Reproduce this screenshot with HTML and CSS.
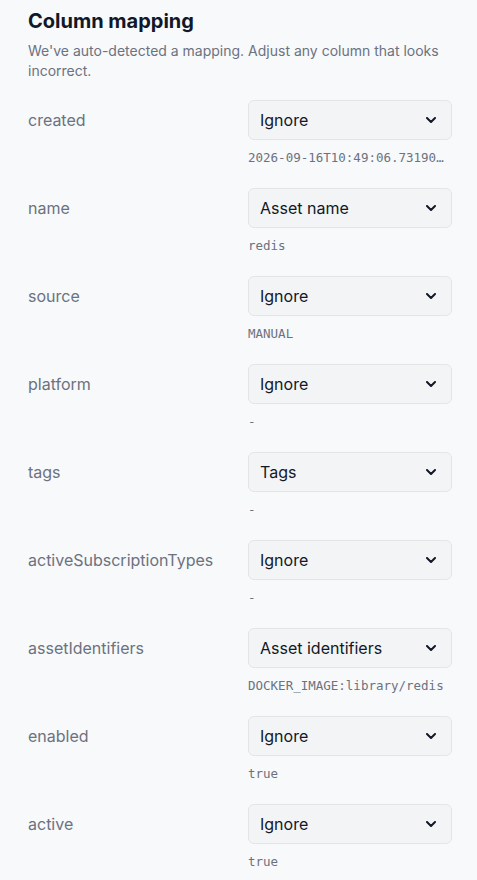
FILE: index.html
```html
<!doctype html>
<html lang="en">
<head>
    <meta charset="UTF-8">
    <meta name="viewport" content="width=device-width, initial-scale=1.0">
    <title>Column mapping</title>
    <link rel="stylesheet" href="styles.css">
</head>
<body>

<h1 class="title">Column mapping</h1>
<p class="lead">We've auto-detected a mapping. Adjust any column that looks incorrect.</p>

<!--one row per source column: name, target field, first sample value-->
<div class="mapping">
    <div class="row">
        <div class="col-name">created</div>
        <div class="col-target">
            <button class="picker"><span>Ignore</span><svg width="10" height="6" viewBox="0 0 10 6"><path d="M1 1l4 4 4-4"/></svg></button>
            <div class="sample" title="2026-09-16T10:49:06.731908+00:00">2026-09-16T10:49:06.731908+00:00</div>
        </div>
    </div>
    <div class="row">
        <div class="col-name">name</div>
        <div class="col-target">
            <button class="picker"><span>Asset name</span><svg width="10" height="6" viewBox="0 0 10 6"><path d="M1 1l4 4 4-4"/></svg></button>
            <div class="sample">redis</div>
        </div>
    </div>
    <div class="row">
        <div class="col-name">source</div>
        <div class="col-target">
            <button class="picker"><span>Ignore</span><svg width="10" height="6" viewBox="0 0 10 6"><path d="M1 1l4 4 4-4"/></svg></button>
            <div class="sample">MANUAL</div>
        </div>
    </div>
    <div class="row">
        <div class="col-name">platform</div>
        <div class="col-target">
            <button class="picker"><span>Ignore</span><svg width="10" height="6" viewBox="0 0 10 6"><path d="M1 1l4 4 4-4"/></svg></button>
            <div class="sample">-</div>
        </div>
    </div>
    <div class="row">
        <div class="col-name">tags</div>
        <div class="col-target">
            <button class="picker"><span>Tags</span><svg width="10" height="6" viewBox="0 0 10 6"><path d="M1 1l4 4 4-4"/></svg></button>
            <div class="sample">-</div>
        </div>
    </div>
    <div class="row">
        <div class="col-name">activeSubscriptionTypes</div>
        <div class="col-target">
            <button class="picker"><span>Ignore</span><svg width="10" height="6" viewBox="0 0 10 6"><path d="M1 1l4 4 4-4"/></svg></button>
            <div class="sample">-</div>
        </div>
    </div>
    <div class="row">
        <div class="col-name">assetIdentifiers</div>
        <div class="col-target">
            <button class="picker"><span>Asset identifiers</span><svg width="10" height="6" viewBox="0 0 10 6"><path d="M1 1l4 4 4-4"/></svg></button>
            <div class="sample">DOCKER_IMAGE:library/redis</div>
        </div>
    </div>
    <div class="row">
        <div class="col-name">enabled</div>
        <div class="col-target">
            <button class="picker"><span>Ignore</span><svg width="10" height="6" viewBox="0 0 10 6"><path d="M1 1l4 4 4-4"/></svg></button>
            <div class="sample">true</div>
        </div>
    </div>
    <div class="row">
        <div class="col-name">active</div>
        <div class="col-target">
            <button class="picker"><span>Ignore</span><svg width="10" height="6" viewBox="0 0 10 6"><path d="M1 1l4 4 4-4"/></svg></button>
            <div class="sample">true</div>
        </div>
    </div>
</div>

</body>
</html>
```

FILE: styles.css
```css
body {
    margin: 0;
    padding: 7px 25px 0 28px;
    background: #f8f9fb;
    font-family: Inter, "Noto Sans", sans-serif;
    color: #111827;
}
.title {
    margin: 0;
    font-size: 20px;
    line-height: 28px;
    font-weight: 700;
}
.lead {
    margin: 6px 0 19px;
    font-size: 14px;
    line-height: 20px;
    color: #6b7280;
}
.row {
    display: grid;
    grid-template-columns: 1fr 204px;
    column-gap: 16px;
    padding-bottom: 21px;
}
.col-name {
    font-size: 16px;
    line-height: 40px;
    color: #6b7280;
    white-space: nowrap;
}
.col-target {
    min-width: 0;
}
.picker {
    display: flex;
    align-items: center;
    justify-content: space-between;
    width: 100%;
    height: 40px;
    padding: 0 15px 1px 11px;
    background: #f3f4f6;
    border: 1px solid #e3e5e9;
    border-radius: 6px;
    font-family: Inter, "Noto Sans", sans-serif;
    font-size: 16px;
    color: #111827;
    text-align: left;
}
.picker svg {
    fill: none;
    stroke: #111827;
    stroke-width: 2;
    stroke-linecap: round;
    stroke-linejoin: round;
}
/* long values are cut with an ellipsis, full text in the tooltip */
.sample {
    margin-top: 9px;
    padding-right: 6px;
    font-family: "DejaVu Sans Mono", monospace;
    font-size: 12.5px;
    line-height: 18px;
    color: #6b7280;
    white-space: nowrap;
    overflow: hidden;
    text-overflow: ellipsis;
}
```
